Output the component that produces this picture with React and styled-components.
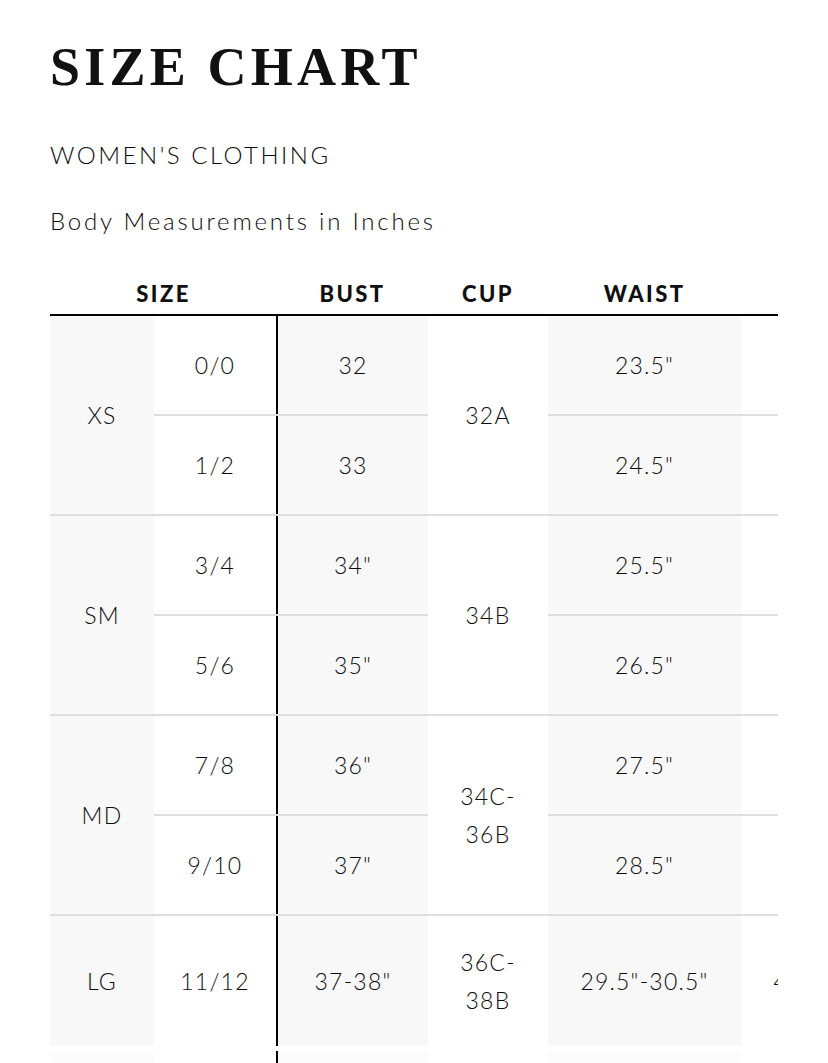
import React from "react";
import styled, { createGlobalStyle } from "styled-components";

const GlobalStyle = createGlobalStyle`
  html, body {
    margin: 0;
    padding: 0;
    background: #fff;
  }
  body {
    font-family: Lato, "Open Sans", sans-serif;
    color: #111;
  }
`;

const groups = [
  {
    label: "XS",
    cup: ["32A"],
    rows: [
      { size: "0/0", bust: "32", waist: '23.5"', hip: '33.5"' },
      { size: "1/2", bust: "33", waist: '24.5"', hip: '34.5"' },
    ],
  },
  {
    label: "SM",
    cup: ["34B"],
    rows: [
      { size: "3/4", bust: '34"', waist: '25.5"', hip: '35.5"' },
      { size: "5/6", bust: '35"', waist: '26.5"', hip: '36.5"' },
    ],
  },
  {
    label: "MD",
    cup: ["34C-", "36B"],
    rows: [
      { size: "7/8", bust: '36"', waist: '27.5"', hip: '37.5"' },
      { size: "9/10", bust: '37"', waist: '28.5"', hip: '38.5"' },
    ],
  },
  {
    label: "LG",
    cup: ["36C-", "38B"],
    tall: true,
    rows: [{ size: "11/12", bust: '37-38"', waist: '29.5"-30.5"', hip: '40.5"-41.5"' }],
  },
  {
    label: "XL",
    cup: ["38C-", "40B"],
    faded: true,
    rows: [{ size: "13/14", bust: '39-40"', waist: '31.5"-32.5"', hip: '42.5"-43.5"' }],
  },
];

const Page = styled.div`
  padding: 40px 0 0 50px;
  width: 728px;
`;

const Title = styled.h1`
  margin: 0;
  font-family: "Liberation Serif", "Times New Roman", serif;
  font-weight: 700;
  font-size: 54px;
  line-height: 54px;
  letter-spacing: 4.2px;
  color: #111;
`;

const Category = styled.h2`
  margin: 46px 0 0;
  font-size: 24px;
  line-height: 30px;
  font-weight: 300;
  letter-spacing: 2.5px;
  color: #0d0d0d;
`;

const Subtitle = styled.p`
  margin: 36px 0 0;
  font-size: 24px;
  line-height: 30px;
  font-weight: 300;
  letter-spacing: 2.8px;
  color: #0d0d0d;
`;

const TableWrap = styled.div`
  margin-top: 32px;
  width: 728px;
  overflow: hidden;
`;

const Table = styled.table`
  border-collapse: collapse;
  table-layout: fixed;
  width: 1100px;
`;

const Head = styled.th`
  height: 42px;
  padding: 4px 0 0;
  font-size: 22px;
  font-weight: 900;
  letter-spacing: 2.4px;
  text-align: center;
  color: #111;
  border-bottom: 2px solid #000;
`;

const Cell = styled.td`
  height: ${(p) => (p.tall ? 130 : 98)}px;
  padding: 0 4px;
  text-align: center;
  vertical-align: middle;
  font-size: 23px;
  font-weight: 300;
  line-height: 38px;
  letter-spacing: 1.2px;
  color: #0d0d0d;
  background: ${(p) => (p.shade ? "#f8f8f8" : "#fff")};
  border-bottom: 2px solid #dedede;
  border-right: ${(p) => (p.divider ? "2px solid #000" : "none")};
`;

const Row = styled.tr`
  opacity: ${(p) => (p.faded ? 0.35 : 1)};
  & > td {
    border-top: ${(p) => (p.faded ? "5px solid #fff" : "none")};
  }
`;

const cols = [104, 123, 151, 120, 193, 193, 216];

const SizeGroup = ({ group }) =>
  group.rows.map((r, i) => (
    <Row key={r.size} faded={group.faded}>
      {i === 0 && (
        <Cell shade rowSpan={group.rows.length}>
          {group.label}
        </Cell>
      )}
      <Cell tall={group.tall} divider>
        {r.size}
      </Cell>
      <Cell shade>{r.bust}</Cell>
      {i === 0 && (
        <Cell rowSpan={group.rows.length}>
          {group.cup.map((c) => (
            <div key={c}>{c}</div>
          ))}
        </Cell>
      )}
      <Cell shade>{r.waist}</Cell>
      <Cell>{r.hip}</Cell>
      <Cell shade />
    </Row>
  ));

export default function App() {
  return (
    <>
      <GlobalStyle />
      <Page>
        <Title>SIZE CHART</Title>
        <Category>WOMEN'S CLOTHING</Category>
        <Subtitle>Body Measurements in Inches</Subtitle>
        <TableWrap>
          <Table>
            <colgroup>
              {cols.map((w, i) => (
                <col key={i} style={{ width: w }} />
              ))}
            </colgroup>
            <thead>
              <tr>
                <Head colSpan={2}>SIZE</Head>
                <Head>BUST</Head>
                <Head>CUP</Head>
                <Head>WAIST</Head>
                <Head>HIP</Head>
                <Head>INSEAM</Head>
              </tr>
            </thead>
            <tbody>
              {groups.map((g) => (
                <SizeGroup key={g.label} group={g} />
              ))}
            </tbody>
          </Table>
        </TableWrap>
      </Page>
    </>
  );
}
